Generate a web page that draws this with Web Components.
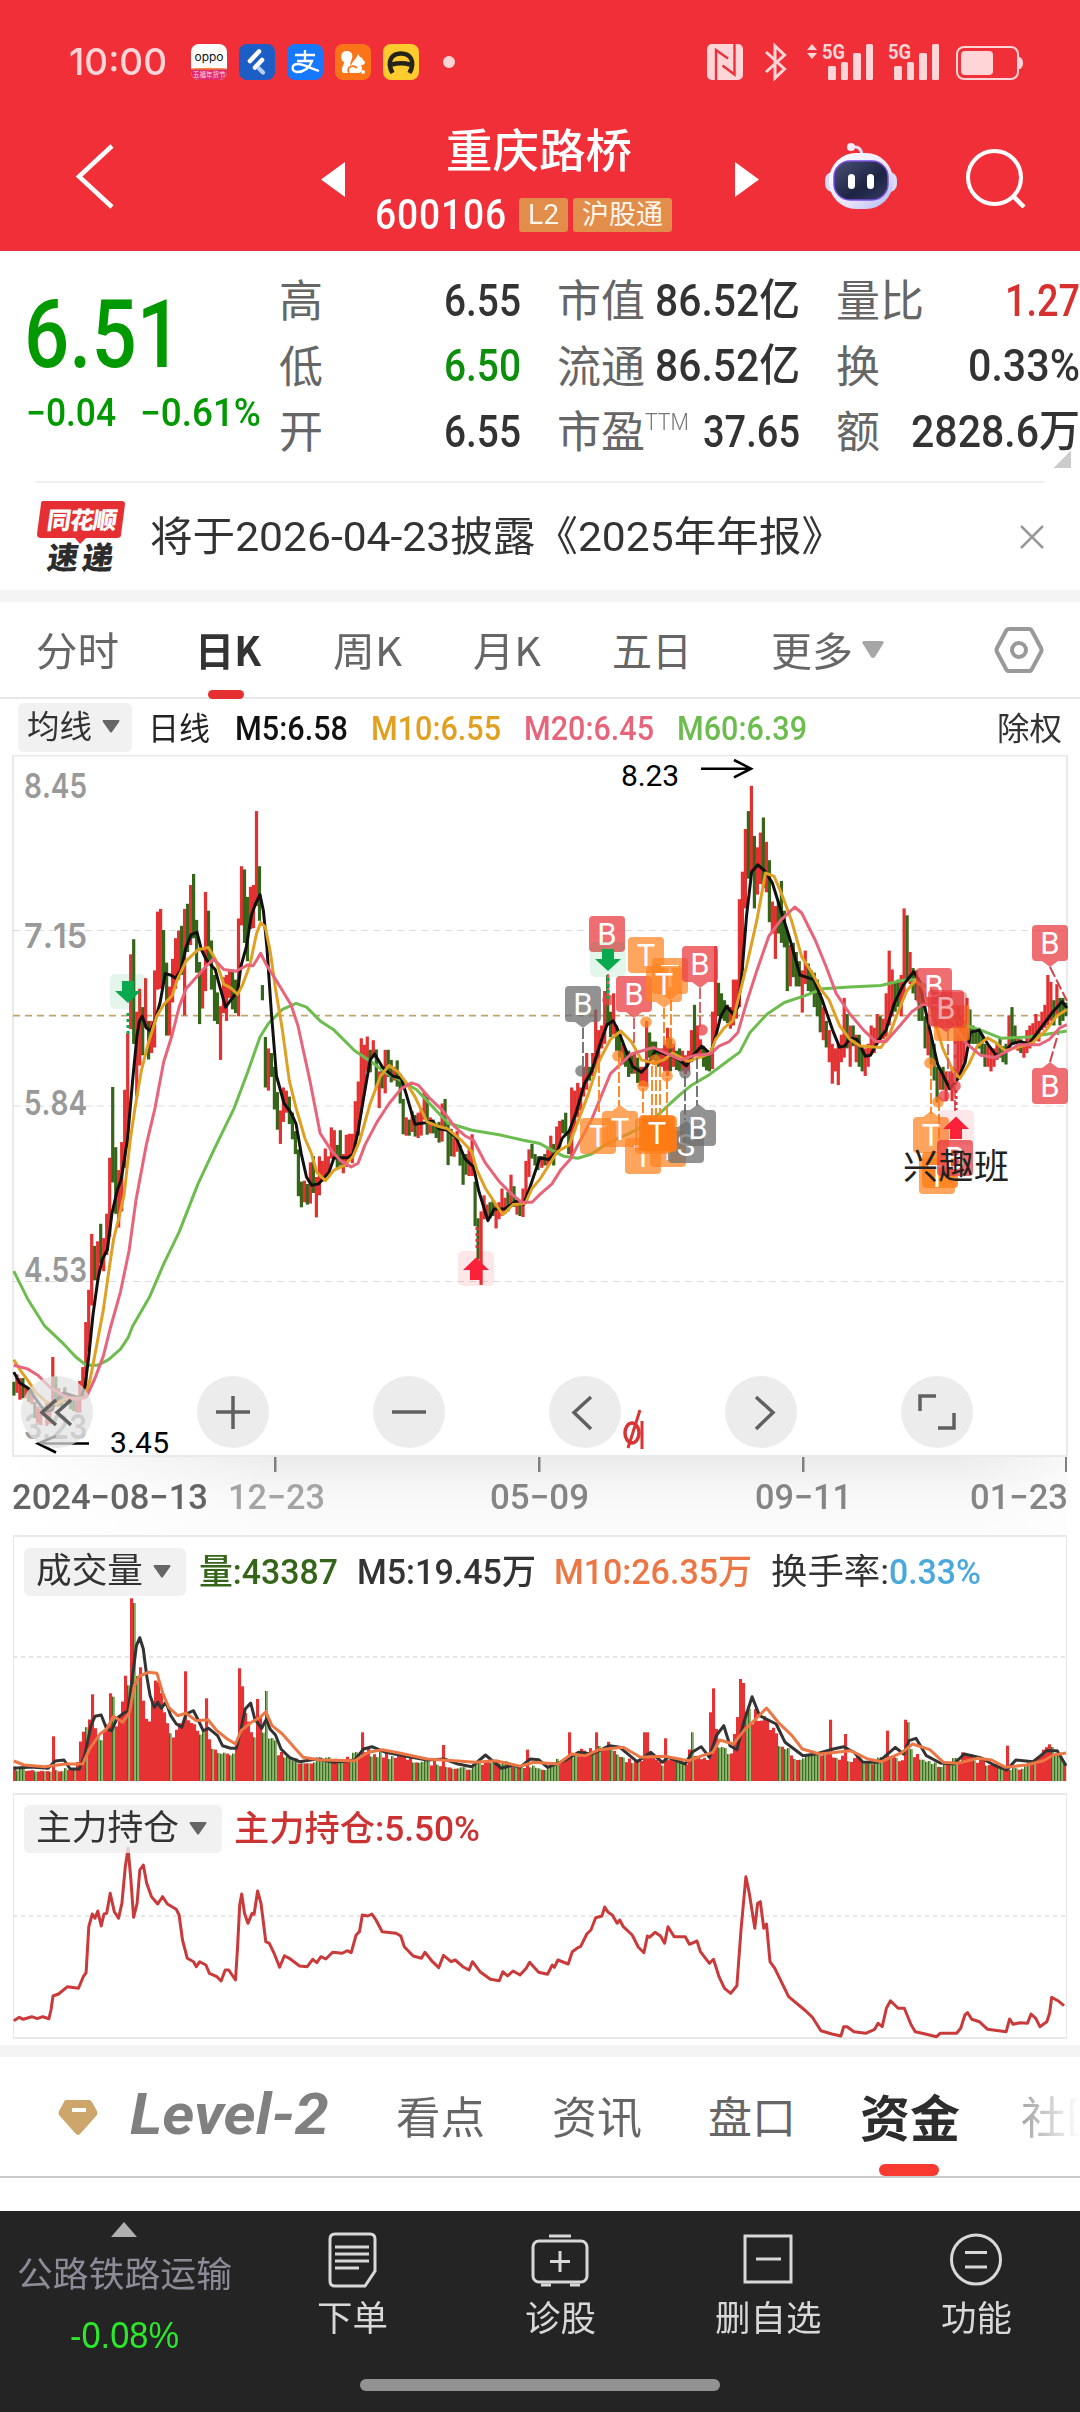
<!DOCTYPE html>
<html lang="zh-CN">
<head>
<meta charset="utf-8">
<title>重庆路桥 600106</title>
<style>
  html, body { margin: 0; padding: 0; }
  body {
    width: 1080px;
    height: 2412px;
    overflow: hidden;
    background: #fff;
    font-family: Roboto, "Noto Sans CJK SC", sans-serif;
    color: #333;
  }
</style>
</head>
<body>
<stock-page></stock-page>

<script>
class StatusBar extends HTMLElement {
  connectedCallback() {
    this.attachShadow({ mode: "open" }).innerHTML = `
      <style>
        :host { display: flex; align-items: center; height: 124px; box-sizing: border-box; padding-left: 69px; color: #ffd5d7; }
        svg { display: block; flex: none; overflow: visible; }
        .time { font: 500 37px/40px Inter, sans-serif; margin-right: 24px; }
        .apps { display: flex; gap: 12px; }
        .dot { width: 12px; height: 12px; border-radius: 50%; background: #ffd5d7; margin-left: 24px; }
        .sys { margin-left: 251px; }
      </style>
      <fit-text class="time" w="98">10:00</fit-text>
      <div class="apps">
        <svg width="36" height="36" viewBox="0 0 36 36">
          <defs><clipPath id="c"><rect width="36" height="36" rx="8"/></clipPath></defs>
          <g clip-path="url(#c)">
            <rect width="36" height="36" fill="#fff"/>
            <path d="M0 25q18-2 36 0v11H0z" fill="#e02c6c"/><path d="M0 24.500q18-1.500 36 0v1H0z" fill="#f08c3c"/>
            <text x="3.500" y="17" font-family="Inter, sans-serif" font-size="11" fill="#111" textLength="29" lengthAdjust="spacingAndGlyphs">oppo</text>
            <text x="2" y="33" font-family="Noto Sans CJK SC, sans-serif" font-size="6.500" fill="#ffd9e4">五福年货节</text>
            <path d="M26 5l3 2M29 3v4M27 8h4" stroke="#f4dcb0" stroke-width=".7"/>
          </g>
        </svg>
        <svg width="36" height="36" viewBox="0 0 36 36">
          <rect width="36" height="36" rx="8" fill="#1c5dc6"/>
          <g stroke="#fff" stroke-width="4.600" stroke-linecap="round"><path d="M11 17L20 7.500"/><path d="M16 23.500l7-7.500"/></g>
          <path d="M20 24.500l4 4" stroke="#b6d0f6" stroke-width="4.200" stroke-linecap="round"/>
        </svg>
        <svg width="36" height="36" viewBox="0 0 36 36">
          <rect width="36" height="36" rx="8" fill="#1677ff"/>
          <g fill="none" stroke="#fff" stroke-width="2.300"><path d="M8 11h20M18 6v11M10 17h15c-3 8-9 11-15 11-6-1-6-8 1-8 5 0 12 4 21 7"/></g>
        </svg>
        <svg width="36" height="36" viewBox="0 0 36 36">
          <rect width="36" height="36" rx="8" fill="#fb7417"/>
          <path d="M8 29c-3-5 1-7 1-11C5 17 5 7 11 7c6-1 8 5 5 10-1 2-1 4 0 5 1-5 5-6 7-12l2 3c2 0 3 3 5 5 0 3-3 3-4 3 2 4 1 7-2 8z" fill="#fff"/>
          <path d="M14 29c-3-6 4-9 8-5" fill="none" stroke="#fb7417" stroke-width="1.800"/><circle cx="28" cy="28" r="2" fill="#fff"/>
        </svg>
        <svg width="36" height="36" viewBox="0 0 36 36">
          <rect width="36" height="36" rx="8" fill="#ffcb2f"/>
          <path d="M9.500 29C3 17 9 9.500 18 9.500S33 17 26.500 29M9 20.500q9-2.500 18 0" fill="none" stroke="#252418" stroke-width="4.500"/>
        </svg>
      </div>
      <div class="dot"></div>
      <svg class="sys" width="320" height="40" viewBox="706 42 320 40" fill="#ffd5d7">
        <rect x="707" y="44" width="36" height="36" rx="5"/>
        <path d="M716 80V50l12 8.500M722.500 65.500l12 9V44" fill="none" stroke="#f12f38" stroke-width="2.400"/>
        <path d="M766 52l18.500 17-9.500 9V46l9.500 9-18.500 17" fill="none" stroke="#ffd5d7" stroke-width="3"/>
        <path d="M807 50l5-6 5 6zM807 53h10l-5 6z"/>
        <text x="822" y="59" font-family="Roboto, sans-serif" font-size="21" font-weight="700" textLength="23" lengthAdjust="spacingAndGlyphs">5G</text>
        <rect x="828" y="66" width="8" height="14" rx="1.500"/><rect x="841" y="62" width="7" height="18" rx="1.500"/>
        <rect x="853" y="53" width="8" height="27" rx="1.500"/><rect x="866" y="44" width="7" height="36" rx="1.500"/>
        <text x="888" y="59" font-family="Roboto, sans-serif" font-size="21" font-weight="700" textLength="23" lengthAdjust="spacingAndGlyphs">5G</text>
        <rect x="894" y="66" width="8" height="14" rx="1.500"/><rect x="907" y="62" width="7" height="18" rx="1.500"/>
        <rect x="919" y="53" width="8" height="27" rx="1.500"/><rect x="932" y="44" width="7" height="36" rx="1.500"/>
        <rect x="957" y="47" width="61" height="32" rx="7" fill="none" stroke="#ffd5d7" stroke-width="2"/>
        <rect x="961" y="51" width="32" height="24" rx="4"/><path d="M1019 57h1q3 2 3 6t-3 6h-1z"/>
      </svg>`;
  }
}

class TitleBar extends HTMLElement {
  connectedCallback() {
    this.attachShadow({ mode: "open" }).innerHTML = `
      <style>
        :host { display: flex; align-items: flex-start; height: 127px; color: #fff; }
        svg { display: block; flex: none; }
        .back { margin: 18px 0 0 74px; }
        .prev { margin: 38px 0 0 205px; }
        .mid { width: 390px; height: 127px; display: flex; flex-direction: column; align-items: center; }
        .name { font: 500 46px/46px "Noto Sans CJK SC", sans-serif; margin: 0 2px 0 0; }
        .code { display: flex; align-items: center; gap: 5px; height: 36px; margin: 27px 2px 0 0; width: 328px; }
        .num { font-size: 42px; line-height: 42px; font-weight: 500; letter-spacing: 1px; margin-right: 7px; }
        .tag { background: #e28d4a; color: #fff6ec; border-radius: 3px; height: 34px; font-size: 27px; line-height: 34px; padding: 0 9px; }
        .next { margin: 38px 0 0 0; }
        .bot { margin: 16px 0 0 64px; }
        .find { margin: 22px 0 0 66px; }
      </style>
      <svg class="back" width="42" height="68" viewBox="74 142 42 68"><path d="M112 146L79 176.500l33 30.500" fill="none" stroke="#fff" stroke-width="4.500"/></svg>
      <svg class="prev" width="24" height="35" viewBox="0 0 24 35"><path d="M24 0v35L0 17.500z" fill="#fff"/></svg>
      <div class="mid">
        <fit-text class="name" w="186">重庆路桥</fit-text>
        <div class="code">
          <fit-text class="num" w="132">600106</fit-text>
          <div class="tag"><fit-text w="31">L2</fit-text></div>
          <div class="tag"><fit-text w="81">沪股通</fit-text></div>
        </div>
      </div>
      <svg class="next" width="24" height="35" viewBox="0 0 24 35"><path d="M0 0v35l24-17.500z" fill="#fff"/></svg>
      <svg class="bot" width="76" height="72" viewBox="823 140 76 72">
        <defs>
          <linearGradient id="h" x1="0" y1="0" x2="1" y2="1"><stop offset="0" stop-color="#fff"/><stop offset=".6" stop-color="#e9e4fc"/><stop offset="1" stop-color="#a9b8f5"/></linearGradient>
          <linearGradient id="f" x1="0" y1="0" x2="1" y2="1"><stop offset="0" stop-color="#4b5275"/><stop offset=".6" stop-color="#1c2343"/><stop offset="1" stop-color="#353c62"/></linearGradient>
        </defs>
        <path d="M851 147q10-2 11 8" fill="none" stroke="#e6dcf6" stroke-width="3"/><circle cx="851" cy="147" r="4" fill="#f2ecfb"/>
        <rect x="825" y="172" width="72" height="20" rx="8" fill="#d8dcf8"/>
        <rect x="829" y="153" width="64" height="56" rx="27" fill="url(#h)"/>
        <rect x="834" y="161" width="54" height="39" rx="16" fill="url(#f)" stroke="#7a4ee0" stroke-width="1.500"/>
        <rect x="848" y="174" width="7" height="15" rx="3.500" fill="#fff"/><rect x="867" y="174" width="7" height="15" rx="3.500" fill="#fff"/>
      </svg>
      <svg class="find" width="62" height="62" viewBox="965 146 62 62" fill="none" stroke="#fff" stroke-width="4"><circle cx="994.500" cy="177.500" r="26.500"/><path d="M1014 197l10 10" stroke-width="4.500"/></svg>`;
  }
}

// label on the left, figure on the right
class StatItem extends HTMLElement {
  connectedCallback() {
    const label = this.getAttribute("label");
    const sup = this.getAttribute("sup");
    this.attachShadow({ mode: "open" }).innerHTML = `
      <style>
        :host { display: flex; align-items: center; height: 65.5px; color: var(--tone, #333); }
        .l { color: #666; font: 44px/60px "Noto Sans CJK SC", sans-serif; margin: -3px 0 0 -2px; }
        .s { color: #777; font: 300 23px/24px Roboto, sans-serif; margin-top: -16px; }
        .v { margin-left: auto; font-size: 44px; line-height: 60px; font-weight: 500; margin-top: 2px; }
      </style>
      <fit-text class="l" w="${label.length * 44}">${label}</fit-text>
      ${sup ? `<fit-text class="s" w="44">${sup}</fit-text>` : ""}
      <fit-text class="v" w="${this.getAttribute("w")}"><slot></slot></fit-text>`;
  }
}

class QuotePanel extends HTMLElement {
  connectedCallback() {
    this.attachShadow({ mode: "open" }).innerHTML = `
      <style>
        :host { display: block; height: 232px; box-sizing: border-box; position: relative; }
        .grid { display: grid; grid-template-columns: 243px 240px 241px 242px; column-gap: 38px; grid-auto-flow: column; grid-template-rows: repeat(3, 65.5px); padding-top: 16px; }
        .price { grid-row: 1 / span 3; color: #090; }
        .big { font-size: 94px; line-height: 100px; font-weight: 500; margin: 18px 0 0 24px; }
        .chg { display: flex; gap: 24px; margin: 6px 0 0 26px; font-size: 38px; line-height: 44px; font-weight: 500; }
        .more { position: absolute; left: 1054px; top: 199px; border: solid transparent; border-width: 18px 0 0 17px; width: 0; height: 0; background: linear-gradient(135deg, transparent 50%, #ccc 50%) border-box; }
        hr { position: absolute; left: 36px; right: 36px; bottom: 0; margin: 0; border: 0; border-top: 2px solid #eee; }
      </style>
      <div class="grid">
        <div class="price">
          <fit-text class="big" w="158">6.51</fit-text>
          <div class="chg"><fit-text w="90">−0.04</fit-text><fit-text w="121">−0.61%</fit-text></div>
        </div>
        <stat-item label="高" w="77">6.55</stat-item>
        <stat-item label="低" w="77" style="--tone:#0c8f0c">6.50</stat-item>
        <stat-item label="开" w="77">6.55</stat-item>
        <stat-item label="市值" w="145">86.52亿</stat-item>
        <stat-item label="流通" w="145">86.52亿</stat-item>
        <stat-item label="市盈" sup="TTM" w="97">37.65</stat-item>
        <stat-item label="量比" w="75" style="--tone:#d9302f">1.27</stat-item>
        <stat-item label="换" w="112">0.33%</stat-item>
        <stat-item label="额" w="169">2828.6万</stat-item>
      </div>
      <div class="more"></div><hr>`;
  }
}

class NoticeBar extends HTMLElement {
  connectedCallback() {
    this.attachShadow({ mode: "open" }).innerHTML = `
      <style>
        :host { display: flex; align-items: center; height: 107px; border-bottom: 12px solid #f4f4f4; }
        svg { flex: none; overflow: visible; }
        .logo { margin-left: 36px; }
        .t { margin-left: 24px; font-size: 41px; line-height: 60px; }
        .x { margin-left: 176px; }
      </style>
      <svg class="logo" width="90" height="76" viewBox="36 498 90 76">
        <path d="M43 500h79q3 0 3 3l-4 31q0 3-4 3H86l-6 6-5-6H41q-4 0-4-4l4-30q0-3 2-3z" fill="#e52f33"/>
        <g font-family="Noto Sans CJK SC, sans-serif" font-weight="900">
          <text transform="translate(46 528) skewX(-8)" font-size="24" fill="#fff" textLength="70">同花顺</text>
          <text transform="translate(46 568) skewX(-8)" font-size="31" fill="#2c2c2c" textLength="66">速递</text>
        </g>
      </svg>
      <fit-text class="t" w="694">将于2026-04-23披露《2025年年报》</fit-text>
      <svg class="x" width="24" height="24" viewBox="0 0 24 24" stroke="#999" stroke-width="2.500"><path d="M1 1l22 22M23 1L1 23"/></svg>`;
  }
}

class PeriodTabs extends HTMLElement {
  connectedCallback() {
    this.attachShadow({ mode: "open" }).innerHTML = `
      <style>
        :host { display: flex; align-items: center; height: 95px; border-bottom: 2px solid #e8e8e8; color: #666; font: 40px/60px "Noto Sans CJK SC", sans-serif; padding-left: 36px; }
        fit-text, .on { margin-right: var(--g); margin-top: -2px; }
        .on { position: relative; font-weight: 700; color: #333; }
        .on fit-text { margin: 0 0 0 -1px; }
        .on::after { content: ""; position: absolute; left: 12px; top: 71px; width: 36px; height: 9px; border-radius: 5px; background: #e52f30; }
        svg { flex: none; }
      </style>
      <fit-text w="83" style="--g:77px">分时</fit-text>
      <div class="on" style="--g:72px"><fit-text w="66">日K</fit-text></div>
      <fit-text w="69" style="--g:71px">周K</fit-text>
      <fit-text w="68" style="--g:71px">月K</fit-text>
      <fit-text w="80" style="--g:79px">五日</fit-text>
      <fit-text w="82" style="--g:9px">更多</fit-text>
      <svg width="22" height="18" viewBox="0 0 22 18"><path d="M2 0h18q3 1 1 3L13 16q-2 2-4 0L1 3Q-1 1 2 0z" fill="#a6a6a6"/></svg>
      <svg style="margin-left:110px" width="50" height="48" viewBox="0 0 50 48" fill="none" stroke="#999" stroke-width="4"><path d="M15 3h20q2 0 3 2l9 17q1 2 0 4l-9 17q-1 2-3 2H15q-2 0-3-2L3 26q-1-2 0-4l9-17q1-2 3-2z"/><circle cx="25" cy="24" r="7"/></svg>`;
  }
}

// grey drop-down pill used above every chart
class PickChip extends HTMLElement {
  connectedCallback() {
    this.attachShadow({ mode: "open" }).innerHTML = `
      <style>
        :host { display: flex; align-items: center; flex: none; background: rgba(238,238,238,.8); border-radius: 6px; box-sizing: border-box; }
        svg { flex: none; margin: -2px 0 0 10px; }
      </style>
      <fit-text w="${this.getAttribute("w")}"><slot></slot></fit-text>
      <svg width="18" height="13" viewBox="0 0 18 13"><path d="M1 0h16q1 1 0 2L10 12q-1 1-2 0L1 2Q0 1 1 0z" fill="#666"/></svg>`;
  }
}

class MaLegend extends HTMLElement {
  connectedCallback() {
    this.attachShadow({ mode: "open" }).innerHTML = `
      <style>
        :host { display: flex; align-items: center; height: 56px; padding-left: 18px; font-size: 33px; line-height: 48px; font-weight: 500; }
        pick-chip { width: 114px; height: 49px; padding-left: 9px; font-weight: 400; font-size: 32px; }
        fit-text { margin-top: 3px; }
        .n { font-weight: 400; font-size: 32px; }
      </style>
      <pick-chip w="65">均线</pick-chip>
      <fit-text class="n" style="margin-left:16px;color:#222" w="62">日线</fit-text>
      <fit-text style="margin-left:25px;color:#111" w="113">M5:6.58</fit-text>
      <fit-text style="margin-left:23px;color:#e2a020" w="130">M10:6.55</fit-text>
      <fit-text style="margin-left:23px;color:#e8647a" w="130">M20:6.45</fit-text>
      <fit-text style="margin-left:23px;color:#6cbd4e" w="130">M60:6.39</fit-text>
      <fit-text class="n" style="margin-left:190px" w="65">除权</fit-text>`;
  }
}

// Plot units: 2.904 per px across, 2.178 per px down.
const KX = 2.904, KY = 2.178, HALF = 1568;
const BARS_A = `1376-1406g 1360-1400r 1368-1415r 1368-1412g 1385-1412r 1390-1420g 1390-1425r 1420-1455g 1430-1465r 1435-1470r 1430-1450g 1420-1472r 1430-1468r 1322-1440r 1365-1430g 1390-1430r 1400-1430g 1388-1420g 1400-1425r 1405-1436g 1410-1440g 1410-1443r 1374-1443r 1344-1410r 1246-1390r 1176-1310r 1054-1210r 1080-1155g 1070-1155r 1032-1118g 1063-1135r 1010-1100r 888-1060r 734-942g 865-1010g 915-1040r 854-1005r 740-910r 617-860r 445-608r 412-640g 570-755r 520-687r 560-665g 497-605r 590-674g 590-660r 480-648r 352-522r 346-520r 392-510g 463-622g 515-622r 455-550r 410-520r 393-500r 383-490g 346-578r 335-440g 294-425r 270-410g 370-485g 462-597g 480-563r 309-525r 350-460g 415-522g 490-590g 528-597g 558-675r 495-573r 490-590r 480-540r 478-565g 500-573g 367-580r 253-382r 260-420g 320-460g 298-390r 294-388r 133-340r 253-372g 512-545g 625-735g 650-742r 660-712g 690-783g 745-827g 785-858r 735-810r 742-790r 755-815g 790-848g 830-880g 870-972g 940-996g 938-985r 945-990g 898-988r 885-965g 930-1018r 885-970r 895-940r 868-930r 885-920r 822-890r 828-892r 860-910g 828-905g 880-922r 838-908r 836-890r 836-900r 765-870r 722-840r 628-790r 642-750r 624-700r 653-702g 632-670r 652-735g 700-780r 690-737g 653-748r 653-712g 675-724g 690-720r 676-733g 705-770g 760-837g 800-840r 805-840g 787-832r 795-842g 790-845r 780-840r 745-805r 755-838g 800-835r 805-835g 815-845g 810-855g 770-853r 760-825g 815-904g 825-885g 845-886r 830-875r 860-905g 885-947g 880-925g 870-928r 837-928r 940-1037g 1020-1110g 1005-1165r 970-1022r 990-1020r 985-1020g 980-1015g 990-1042r 985-1022r 955-1015r 975-1010r 962-1005g 925-990r 950-995g 980-1012r 985-1015g 955-1017r 895-985r 870-930r 858-890g 880-905g 885-915g`;
const BARS_B = `885-910r 880-905g 870-905r 840-895r 858-905g 820-880r 808-865r 805-835g 790-840g 830-880g 735-885r 742-830r 725-800r 735-785r 690-755r 660-740r 690-720g 660-710r 565-695r 610-680r 600-650r 525-640r 490-600g 570-625g 530-620r 600-655g 620-670g 640-685r 650-690g 655-712g 665-705g 660-705r 670-725g 690-732r 690-733r 590-733r 615-670g 635-675g 635-685g 650-690g 650-690r 640-700r 605-710r 625-700g 640-690r 655-697g 650-700g 655-700r 665-706r 655-700r 610-680r 555-665g 600-665r 630-670r 645-690g 655-698g 660-700g 570-695r 427-630r 507-580g 530-585g 545-590g 555-595g 560-607r 500-600r 500-585r 325-560r 265-480r 172-345r 133-280g 78-270r 187-345g 212-315r 180-292r 147-300g 200-310r 240-375g 330-400r 340-455r 330-400g 285-420g 350-430g 395-525g 425-515r 420-495g 440-515g 460-515g 480-572r 437-510r 465-525g 480-530g 485-560g 500-580g 530-615g 560-632r 590-648g 610-680r 640-727r 650-700r 640-730r 620-680r 540-670r 575-650g 600-690r 600-645g 620-680r 620-690g 645-700g 650-710r 640-690r 600-660r 605-660r 575-640r 580-635g 585-630r 530-625r 437-600r 478-580r 505-570g 500-560g 490-580r 345-540r 360-500g 440-510r 475-530g 480-545g 500-590g 520-590g 580-650g 600-665r 625-685g 640-720g 690-768g 700-740r 690-740g 700-765r 700-740r 690-765r 600-730r 560-715r 580-700r 590-680r 540-640r 565-640g 600-640g 610-640g 605-650g 620-665g 640-690g 645-690r 650-700r 650-690r 640-675r 625-670g 645-680g 640-685g 578-650r 560-640g 600-640g 625-655r 630-660g 635-670r 610-660r 600-650r 595-640r 575-630r 590-635r 570-610r 555-605r 490-600r 505-590r 545-600g 510-580r 540-600g 540-590g 550-580g`;
const LINES = [
  ["#6cbd4e", "40,1135 80,1195 130,1255 180,1290 220,1322 250,1340 285,1340 315,1328 350,1305 372,1280 385,1255 435,1190 475,1120 520,1050 575,945 625,865 680,780 720,700 755,625 780,595 820,565 860,552 890,560 930,590 970,610 1030,655 1080,680 1120,703 1160,718 1210,740 1260,780 1300,812 1370,828 1450,838 1520,850",
    "0,857 30,870 70,885 110,889 150,880 200,855 260,835 310,815 350,790 400,755 440,730 490,708 540,680 580,658 610,615 660,575 710,550 770,535 820,520 900,516 990,513 1050,502 1095,500 1140,525 1180,565 1230,598 1280,610 1340,628 1420,625 1480,618 1530,612"],
  ["#111", "40,1355 57,1378 85,1392 105,1415 130,1440 150,1438 165,1415 185,1400 205,1405 235,1412 247,1385 258,1320 270,1230 285,1150 297,1110 312,1088 325,1010 340,960 352,935 370,850 385,720 398,620 405,590 413,580 425,605 437,612 450,590 465,550 480,487 495,490 510,497 525,480 540,430 555,402 572,397 585,435 600,458 625,478 640,520 655,560 670,545 690,525 700,470 715,430 730,360 742,335 755,315 765,350 775,430 788,570 803,710 825,770 845,790 860,815 875,880 890,930 905,948 925,945 955,920 970,888 1010,888 1025,880 1040,830 1060,740 1075,675 1088,662 1110,690 1140,710 1165,715 1180,750 1205,815 1235,812 1255,808 1275,825 1300,828 1325,845 1350,890 1375,908 1390,960 1417,1025 1435,1000 1465,1000 1500,982 1520,990 1540,950",
    "0,888 25,892 50,875 65,845 85,830 105,790 130,725 150,700 175,640 195,598 213,590 230,615 250,655 270,690 295,702 310,690 335,655 355,660 375,665 400,672 425,688 445,665 470,645 495,662 510,625 525,580 542,558 560,575 575,560 585,500 600,360 615,265 633,250 655,265 675,290 700,350 725,410 755,490 775,495 795,500 820,545 850,610 870,647 885,645 900,628 920,630 945,667 960,665 985,630 1005,610 1030,550 1055,512 1085,483 1100,500 1125,585 1155,685 1190,738 1215,715 1235,680 1250,615 1275,610 1300,640 1325,665 1345,662 1370,640 1395,635 1420,640 1460,600 1490,570 1517,548 1530,562"],
  ["#dfa024", "40,1328 60,1352 80,1372 105,1400 135,1420 165,1425 195,1410 225,1412 247,1410 262,1370 280,1300 300,1220 315,1140 330,1065 345,1020 360,970 378,850 392,780 410,700 430,640 455,580 475,555 500,535 515,500 540,460 575,435 605,430 625,455 650,510 670,518 690,532 705,510 725,470 745,400 757,376 770,385 785,440 800,520 820,610 840,720 860,780 885,845 905,880 920,920 945,938 970,915 1000,905 1025,885 1045,850 1075,770 1105,710 1130,687 1155,700 1180,725 1205,755 1240,810 1275,820 1300,825 1340,850 1370,875 1385,915 1410,955 1440,990 1460,1012 1490,990 1525,988 1545,955",
    "0,935 25,905 50,875 85,860 110,810 140,750 170,680 205,630 235,612 265,635 295,675 330,682 360,675 385,660 410,670 430,678 470,668 495,660 510,630 535,605 560,590 580,530 600,470 630,370 655,268 680,275 700,310 730,370 760,450 790,485 815,520 840,545 870,600 900,630 930,645 990,648 1015,620 1040,570 1065,525 1090,502 1110,515 1135,560 1170,650 1200,700 1220,715 1245,685 1270,645 1300,627 1325,638 1350,655 1375,650 1400,645 1430,638 1470,610 1500,580 1530,565"],
  ["#e8647a", "40,1340 80,1348 110,1362 145,1388 180,1405 220,1415 250,1410 275,1370 300,1320 320,1260 350,1180 375,1090 395,980 425,860 450,780 475,680 500,620 520,560 540,520 570,495 600,470 620,455 650,478 685,482 720,468 735,470 757,443 775,470 805,505 845,555 865,600 900,720 930,835 960,870 990,895 1020,908 1040,900 1060,860 1095,810 1130,770 1165,738 1195,725 1215,730 1250,760 1285,785 1320,820 1350,840 1375,850 1410,900 1450,940 1490,970 1515,985 1545,985",
    "0,968 35,945 60,915 90,890 110,860 150,805 180,750 205,705 240,680 265,662 330,648 370,662 410,675 450,665 495,662 520,645 550,635 575,615 600,550 630,480 665,405 700,370 740,342 760,355 800,415 830,470 860,530 900,575 940,610 975,635 1005,635 1040,605 1080,570 1115,552 1150,565 1200,600 1240,640 1280,665 1320,670 1360,655 1390,642 1450,642 1480,630 1510,605 1530,598"]
];
// x, y, letter, fill, tip side
const MARKS = [
  [565, 986, "B", "gray", "d"], [589, 916, "B", "red", ""], [616, 976, "B", "red", "d"],
  [628, 937, "T", "org", ""], [652, 958, "T", "org", "d"], [646, 966, "T", "org", "d"], [682, 946, "B", "red", "d"],
  [580, 1118, "T", "org", ""], [602, 1111, "T", "org", "u"], [625, 1138, "T", "org", ""], [650, 1131, "T", "org", ""],
  [668, 1127, "S", "gray", "u"], [635, 1118, "", "org", ""], [641, 1116, "", "org", ""], [639, 1115, "T", "org2", ""], [680, 1110, "B", "gray", "u"],
  [916, 968, "B", "red", ""], [934, 1005, "", "org", ""], [928, 990, "B", "red", "d"], [931, 992, "", "red2", ""],
  [1032, 925, "B", "red", "d"], [1032, 1068, "B", "red", "u"],
  [913, 1117, "T", "org", "u"], [922, 1152, "", "org2", ""], [919, 1158, "T", "org", ""], [937, 1140, "B", "red", ""]
];
const INK = { gray: "rgba(110,110,110,.75)", red: "rgba(232,64,68,.76)", red2: "rgba(226,40,44,.4)", org: "rgba(255,130,30,.72)", org2: "rgba(255,120,15,.8)" };

function toPoints(list, shift, top) {
  return list.split(" ").map(p => {
    const [x, y] = p.split(",").map(Number);
    return ((x + shift) / KX).toFixed(1) + "," + (top + y / KY).toFixed(1);
  }).join(" ");
}

class KlineChart extends HTMLElement {
  connectedCallback() {
    this.attachShadow({ mode: "open" }).innerHTML = `
      <style>
        :host { display: block; position: relative; height: 702px; }
        svg { display: block; }
        .ctl { position: absolute; left: 21px; top: 621px; display: flex; gap: 104px; }
        .ctl span { width: 72px; height: 72px; border-radius: 50%; background: rgba(234,234,234,.9); }
        .ctl span:first-child { background: rgba(226,226,226,.72); }
        .ctl svg { fill: none; stroke: #606060; stroke-width: 3.500; }
        text { white-space: pre; font-kerning: none; }
      </style>
      <svg width="1080" height="702" viewBox="0 755 1080 702">
        <rect x="13" y="755.500" width="1054" height="700.500" fill="none" stroke="#e8e8e8" stroke-width="1.800"/>
        <g stroke="#dcdcdc" stroke-dasharray="7 5"><path d="M13 930.500h1054M13 1106h1054M13 1281.500h1054"/></g>
        <path d="M13 1015.700h1054" stroke="#c0a468" stroke-width="1.700" stroke-dasharray="7 5"/>
        <g font-family="Inter, sans-serif" font-weight="600" font-size="34" fill="#999">
          ${[["8.45", 798], ["7.15", 948], ["5.84", 1114.5], ["4.53", 1281.5], ["3.23", 1438.5]].map(([t, y]) => `<text x="24" y="${y}" textLength="63" lengthAdjust="spacingAndGlyphs">${t}</text>`).join("")}
        </g>
        ${this._bars(BARS_A, 40, 1562)}${this._bars(BARS_B, HALF + 5, HALF + 1527)}
        <g fill="none" stroke-width="3" stroke-linejoin="round">
          ${LINES.map(([c, a, b]) => `<polyline stroke="${c}" points="${toPoints(a, 0, 750)} ${toPoints(b, HALF, 750)}"/>`).join("")}
        </g>
        ${this._stems()}
        ${MARKS.map(m => this._mark(...m)).join("")}
        ${this._arrow(128, 974, "#08a84e", true)}${this._arrow(608, 942, "#08a84e", true)}
        ${this._arrow(476, 1251, "#fa2138", false)}${this._arrow(956, 1110, "#fa2138", false)}
        <g fill="none" stroke="#000" stroke-width="2.600"><path d="M701 768.700h50M734 760l17 8.700-17 8.700M89 1443.500H38M56 1436l-18 7.500 18 9"/></g>
        <g font-family="Roboto, sans-serif" font-size="30" fill="#000">
          <text x="621" y="785.500" textLength="58">8.23</text><text x="110" y="1453" textLength="59">3.45</text>
          <text x="903" y="1179" font-family="Noto Sans CJK SC, sans-serif" font-size="35" fill="#222" textLength="106">兴趣班</text>
        </g>
        <g fill="none" stroke="#d93535" stroke-width="3.500"><ellipse cx="632" cy="1433" rx="7" ry="10"/><path d="M642 1421v28M640 1410l-12 38" stroke-width="3"/></g>
      </svg>
      <div class="ctl">
        ${["M35 24L21 36.500 35 49M50 24L36 36.500 50 49", "M36 20v33M19 36h34", "M19 36h34", "M42 21L25 36.500 42 53", "M31 21l17 15.500L31 53", "M19 35V20h16M53 37v15H37"]
          .map(d => `<span><svg width="72" height="72" viewBox="0 0 72 72"><path d="${d}"/></svg></span>`).join("")}
      </div>`;
  }
  _bars(src, from, to) {
    const list = src.split(" ");
    const step = (to - from) / (list.length - 1);
    return list.map((b, i) => {
      const [, t, e, c] = b.match(/(\d+)-(\d+)(\w)/);
      const x = (from + step * i) / KX - 1.5;
      return `<rect x="${x.toFixed(1)}" y="${(750 + t / KY).toFixed(1)}" width="3.200" height="${((e - t) / KY).toFixed(1)}" fill="${c === "r" ? "#e33030" : "#356519"}"/>`;
    }).join("");
  }
  _stems() {
    const s = [
      ["#777", 583, 1028, 583, 1066], ["#e06068", 608, 974, 608, 1000], ["#e06068", 634, 1018, 634, 1044], ["#ff8a28", 664, 1008, 664, 1045],
      ["#ff8a28", 671, 1000, 671, 1042], ["#e06068", 700, 988, 700, 1030], ["#ff8a28", 599, 1062, 599, 1112], ["#ff8a28", 619, 1058, 619, 1106],
      ["#ff8a28", 643, 1088, 643, 1136], ["#ff8a28", 652, 1066, 652, 1115], ["#ff8a28", 656, 1066, 656, 1115], ["#ff8a28", 660, 1066, 660, 1115],
      ["#ff8a28", 667, 1078, 667, 1128], ["#777", 685, 1076, 685, 1120], ["#777", 697, 1058, 697, 1106], ["#d8404a", 1050, 967, 1067, 1001],
      ["#d8404a", 1050, 1062, 1058, 1034], ["#ff8a28", 931, 1065, 931, 1114], ["#ff8a28", 939, 1100, 939, 1150], ["#e06068", 955, 1030, 955, 1112], ["#e06068", 948, 1030, 948, 1080]
    ].map(([c, a, b, d, e]) => `<path d="M${a} ${b}L${d} ${e}" stroke="${c}" stroke-width="2" stroke-dasharray="11 3"/>`).join("");
    const dots = [["gray", 581, 1071], ["org", 618, 1056], ["org", 646, 1022], ["org", 670, 1043], ["org", 643, 1086], ["org", 667, 1076], ["gray", 685, 1073], ["red", 702, 1030], ["red", 608, 1000], ["org", 930, 1063], ["org", 938, 1102], ["red", 955, 1086], ["red", 944, 1096], ["org", 655, 1060]]
      .map(([k, x, y]) => `<circle cx="${x}" cy="${y}" r="5.800" fill="${INK[k]}"/>`).join("");
    const dotted = `<path d="M128 1013v23M608 978v24" stroke="#08a84e" stroke-width="3" stroke-dasharray="3 3"/><path d="M477 1227v22M956 1090v20" stroke="#e03040" stroke-width="3" stroke-dasharray="3 3"/>`;
    return s + dots + dotted;
  }
  _mark(x, y, t, k, tip) {
    let d = `M${x + 4} ${y}h28q4 0 4 4v28q0 4-4 4h-28q-4 0-4-4v-28q0-4 4-4z`;
    if (tip === "d") d += `M${x + 10} ${y + 36}h16l-8 6z`;
    if (tip === "u") d += `M${x + 10} ${y}h16l-8-6z`;
    return `<path d="${d}" fill="${INK[k]}"/>` +
      (t ? `<text x="${x + 18}" y="${y + 28.5}" text-anchor="middle" font-family="Roboto, sans-serif" font-size="31" fill="#fff">${t}</text>` : "");
  }
  _arrow(x, y, c, down) {
    const p = down ? "M-6 7h12v10h7l-13 12-13-12h7z" : "M-6 29h12V19h7L0 6.500-13 19h7z";
    return `<g transform="translate(${x} ${y})"><rect x="-18" width="36" height="35" rx="5" fill="${c}" opacity=".11"/><path d="${p}" fill="${c}"/></g>`;
  }
}

class DateAxis extends HTMLElement {
  connectedCallback() {
    this.attachShadow({ mode: "open" }).innerHTML = `
      <style>
        :host { display: flex; align-items: center; height: 78px; margin: 0 13px; font: 500 35px/40px Roboto, sans-serif; color: #858585; background:
          linear-gradient(#808080, #808080) 261px 0/2.5px 15px no-repeat, linear-gradient(#808080, #808080) 525px 0/2.5px 15px no-repeat,
          linear-gradient(#808080, #808080) 789px 0/2.5px 15px no-repeat, linear-gradient(#808080, #808080) 1052px 0/2.5px 15px no-repeat,
          linear-gradient(90deg, #fff, transparent 26%, transparent 90%, rgba(255,255,255,.6)), linear-gradient(#ececec, #f8f8f8 50%, #fcfcfc); }
        fit-text { margin-top: 4px; }
        .a { color: #646464; }
        .b { color: #a4a4a4; }
      </style>
      <fit-text class="a" style="margin-left:-1px" w="196">2024−08−13</fit-text>
      <fit-text class="b" style="margin-left:20px" w="97">12−23</fit-text>
      <fit-text style="margin-left:165px" w="99">05−09</fit-text>
      <fit-text style="margin-left:166px" w="97">09−11</fit-text>
      <fit-text style="margin-left:118px" w="98">01−23</fit-text>`;
  }
}

const VOL = "18,568 45,575 72,575 90,575 110,565 115,520 122,450 128,395 133,430 150,470 160,430 168,470 176,400 183,300 194,200 203,270 208,380 216,440 225,330 235,380 245,455 262,450 275,430 290,460 300,470 310,500 320,525 335,515 342,535 348,370 358,420 366,470 380,430 390,480 400,500 410,530 430,545 460,545 500,545 520,520 535,520 560,525 600,545 640,555 680,570 700,550 730,550 760,560 790,570 805,550 830,530 870,510 890,500 905,530 915,550 940,530 960,560 980,540 995,560 1003,500 1015,540 1030,550 1036,430 1042,480 1060,540 1075,400 1090,390 1100,430 1110,440 1130,480 1145,510 1160,540 1200,520 1240,540 1260,550 1280,540 1295,520 1310,550 1316,450 1325,520 1345,550 1370,560 1400,530 1430,550 1460,570 1480,570 1500,540 1527,510 1550,560";
const SPIKES = { 76: 472, 133: 346, 159: 343, 163: 353, 190: 58, 194: 72, 203: 265, 228: 310, 268: 277, 298: 358, 347: 268, 351: 322, 372: 360, 386: 336, 525: 460, 642: 498, 764: 512, 829: 460, 864: 460, 938: 460, 968: 478, 1007: 460, 1033: 400, 1038: 328, 1074: 300, 1078: 312, 1208: 422, 1226: 465, 1290: 455, 1313: 422, 1318: 430, 1465: 500, 1526: 496 };
const GREEN_SPIKES = [163, 194, 386, 1007, 1318];
const VMA5 = "20,568 45,564 70,568 80,546 93,543 102,570 115,570 123,530 132,440 138,412 147,408 155,450 162,455 170,418 178,405 186,395 192,300 198,200 203,176 208,210 213,290 218,350 224,385 229,370 234,388 241,370 248,410 256,435 264,445 270,405 281,395 287,420 295,455 303,448 316,470 323,500 335,508 343,508 350,450 356,390 364,372 370,420 380,448 387,420 392,450 400,468 408,510 420,535 435,548 460,540 485,550 515,543 528,510 540,503 560,520 590,532 620,543 645,540 665,555 685,563 705,528 728,568 745,558 755,565 770,540 782,542 795,565 820,545 840,520 860,525 885,500 900,505 925,548 945,520 962,550 970,535 995,555 1005,520 1018,503 1030,535 1040,470 1051,440 1060,500 1070,512 1080,430 1092,353 1103,410 1127,435 1140,490 1166,530 1185,525 1210,510 1225,503 1240,520 1253,550 1275,550 1300,505 1312,525 1320,485 1330,478 1345,530 1365,552 1385,555 1400,525 1425,537 1445,560 1462,573 1475,543 1500,548 1520,515 1535,515 1548,560";
const VMA10 = "20,546 35,558 65,563 95,555 120,555 130,510 145,465 155,450 165,412 178,430 188,400 195,320 202,292 215,280 228,283 236,340 245,385 258,410 270,403 285,425 302,422 315,455 330,480 342,495 350,455 365,430 378,415 386,398 395,440 410,465 425,500 440,535 465,543 515,545 535,520 555,512 580,522 620,540 660,545 690,550 720,545 755,562 775,550 810,555 830,525 850,530 870,512 905,505 930,535 965,532 1000,545 1020,530 1035,520 1045,483 1065,495 1080,455 1095,425 1113,387 1130,430 1150,470 1165,510 1190,525 1235,515 1260,540 1280,548 1310,520 1325,495 1350,512 1370,550 1390,553 1420,538 1440,543 1460,565 1490,558 1515,545 1530,528 1548,522";

class VolumeChart extends HTMLElement {
  connectedCallback() {
    this.attachShadow({ mode: "open" }).innerHTML = `
      <style>
        :host { display: block; height: 247px; margin: 0 13px; border: solid #e8e8e8; border-width: 2px 1.5px 0; box-sizing: border-box; }
        .row { display: flex; align-items: center; height: 70px; padding-left: 10px; font-size: 35px; line-height: 50px; }
        pick-chip { width: 162px; height: 48px; padding-left: 12px; }
        .row > fit-text { margin-top: 2px; }
        b { font-weight: 500; }
        svg { display: block; margin-left: -14px; }
      </style>
      <div class="row">
        <pick-chip w="107">成交量</pick-chip>
        <fit-text style="margin-left:13px;color:#356519" w="139"><b>量:43387</b></fit-text>
        <fit-text style="margin-left:19px" w="179"><b>M5:19.45万</b></fit-text>
        <fit-text style="margin-left:18px;color:#ec7745" w="198"><b>M10:26.35万</b></fit-text>
        <fit-text style="margin-left:19px" w="118">换手率:</fit-text>
        <fit-text style="color:#4aa8dc" w="92"><b>0.33%</b></fit-text>
      </div>
      <svg width="1080" height="174" viewBox="0 1608 1080 174" overflow="visible">
        <path d="M13 1658h1054" stroke="#e6e6e6" stroke-width="2" stroke-dasharray="4 4"/>
        ${this._bars()}
        <g fill="none" stroke-width="3" stroke-linejoin="round"><polyline stroke="#333" points="${this._pts(VMA5)}"/><polyline stroke="#ec7745" points="${this._pts(VMA10)}"/></g>
      </svg>`;
  }
  _pts(s) {
    return s.split(" ").map(p => { const [x, y] = p.split(","); return (x / 1.452).toFixed(1) + "," + (1580 + y / 3).toFixed(1); }).join(" ");
  }
  _bars() {
    const env = VOL.split(" ").map(p => p.split(",").map(Number));
    const out = [];
    let seed = 7, run = "r";
    for (let x = 14.5; x < 1066; x += 3) {
      const u = x * 1.452;
      let i = env.findIndex(p => p[0] > u);
      if (i < 1) i = 1;
      const [a, b] = [env[i - 1], env[i]];
      seed = (seed * 16807) % 2147483647;
      const rnd = seed / 2147483647;
      let y = a[1] + (b[1] - a[1]) * (u - a[0]) / (b[0] - a[0]);
      y += (rnd - .5) * (604 - y) * .35;
      if (rnd > .6) run = run === "r" ? "g" : "r";
      let c = u > 105 && u < 240 ? (rnd > .82 ? "g" : "r") : run;
      for (const k in SPIKES) {
        if (Math.abs(k - u) < 2.2) { y = SPIKES[k]; c = GREEN_SPIKES.includes(+k) ? "g" : "r"; }
      }
      const top = (1580 + y / 3).toFixed(1), h = (1782 - top).toFixed(1);
      out.push(c === "r" ? `<rect x="${x - 1.5}" y="${top}" width="3.100" height="${h}" fill="#e63232"/>`
        : `<rect x="${x - 1.5}" y="${top}" width="3" height="${h}" fill="#8fb873"/><rect x="${x - 1.5}" y="${top}" width="1.200" height="${h}" fill="#3d6b22"/>`);
    }
    return out.join("");
  }
}

const HOLD = "20,722 28,712 34,718 46,710 54,716 62,710 71,716 74,690 77,648 85,642 98,620 114,625 121,590 125,578 129,440 134,402 138,415 142,393 147,438 151,402 155,400 160,340 166,395 172,415 177,370 182,260 186,205 190,300 194,412 199,370 203,270 208,255 213,310 220,350 229,372 236,350 243,372 256,388 260,405 265,480 272,535 281,545 285,560 290,545 299,555 304,580 315,590 321,603 327,570 332,570 342,600 345,500 348,375 351,342 355,400 360,430 366,400 369,403 374,333 379,370 386,485 391,490 398,520 406,562 413,527 420,535 435,558 446,560 454,538 460,548 466,530 473,537 483,517 497,520 504,512 510,518 517,465 522,455 526,405 534,408 540,402 546,420 555,455 575,460 582,468 587,500 600,528 612,535 617,517 628,545 637,563 644,526 655,545 661,540 672,560 681,570 686,545 697,575 712,598 725,602 730,575 737,588 745,573 755,585 764,565 769,547 782,577 795,583 802,555 805,562 810,540 825,552 831,515 839,503 843,500 852,462 858,450 865,413 874,408 878,381 883,397 889,405 896,430 900,420 905,440 918,465 927,502 935,518 940,468 943,472 951,457 959,468 965,490 970,440 979,470 995,470 1001,493 1012,483 1017,515 1030,550 1036,538 1044,590 1052,625 1061,640 1070,617 1076,450 1083,290 1088,340 1096,445 1100,370 1104,365 1109,445 1113,432 1118,545 1125,565 1138,620 1145,650 1170,693 1180,713 1192,752 1208,762 1221,768 1225,740 1230,740 1240,755 1257,760 1270,748 1275,730 1281,740 1287,685 1293,662 1304,685 1313,685 1323,735 1329,755 1345,763 1360,770 1365,760 1389,760 1395,745 1401,705 1405,698 1411,718 1422,725 1434,748 1461,755 1466,717 1471,733 1481,728 1492,730 1497,702 1504,715 1510,740 1520,725 1524,700 1527,652 1536,662 1545,677";

class HoldingChart extends HTMLElement {
  connectedCallback() {
    const pts = HOLD.split(" ").map(p => { const [x, y] = p.split(","); return (x / 1.452).toFixed(1) + "," + (1780 + y / 3).toFixed(1); }).join(" ");
    this.attachShadow({ mode: "open" }).innerHTML = `
      <style>
        :host { display: grid; height: 246px; margin: 11px 13px 6px; border: solid #e8e8e8; border-width: 2px 1.5px; box-sizing: border-box; }
        svg, .row { grid-area: 1 / 1; }
        .row { display: flex; align-items: center; height: 68px; padding-left: 10px; font-size: 35px; line-height: 50px; }
        pick-chip { width: 198px; height: 48px; padding-left: 12px; }
        .row > fit-text { margin-top: 2px; }
        b { font-weight: 500; }
        svg { margin-left: -14px; }
      </style>
      <svg width="1080" height="242" viewBox="0 1795 1080 242" fill="none" overflow="visible">
        <path d="M13 1916h1054" stroke="#e6e6e6" stroke-width="2" stroke-dasharray="4 4"/>
        <polyline points="${pts}" stroke="#cb3a3a" stroke-width="3" stroke-linejoin="round"/>
      </svg>
      <div class="row">
        <pick-chip w="143">主力持仓</pick-chip>
        <fit-text style="margin-left:12px;color:#cc3232" w="246"><b>主力持仓:5.50%</b></fit-text>
      </div>`;
  }
}

class SectionTabs extends HTMLElement {
  connectedCallback() {
    this.attachShadow({ mode: "open" }).innerHTML = `
      <style>
        :host { display: flex; align-items: center; height: 119px; border-top: 12px solid #f4f4f4; border-bottom: 2px solid #c9c9c9; overflow: hidden; color: #666; font: 44px/60px "Noto Sans CJK SC", sans-serif; padding: 0 0 0 55px; }
        svg { flex: none; }
        fit-text { margin-top: -3px; }
        .lv { font: italic 700 57px/60px Roboto, sans-serif; color: #808080; margin-left: 29px; }
        .on { position: relative; margin-left: 64px; font-weight: 700; font-size: 50px; color: #2d2d2d; }
        .on::after { content: ""; position: absolute; left: 19px; top: 76px; width: 60px; height: 12px; border-radius: 6px; background: #f93a31; }
        .out { margin-left: 61px; width: 60px; overflow: hidden; mask-image: linear-gradient(90deg, #0009, #0000); }
        .out fit-text { margin: 0; }
        .out { margin-top: -3px; }
      </style>
      <svg width="46" height="44" viewBox="55 2094 46 44"><path d="M66 2099h23q2 0 3 2l5 9q1 2 0 4l-17 19q-2 2-4 0l-17-19q-1-2 0-4l5-9q0-2 2-2z" fill="#cda66b"/><path d="M72 2109h14" stroke="#fff" stroke-width="4"/></svg>
      <fit-text class="lv" w="199">Level-2</fit-text>
      <fit-text style="margin-left:67px" w="89">看点</fit-text>
      <fit-text style="margin-left:67px" w="90">资讯</fit-text>
      <fit-text style="margin-left:66px" w="88">盘口</fit-text>
      <div class="on"><fit-text w="100">资金</fit-text></div>
      <div class="out"><fit-text w="90">社区</fit-text></div>`;
  }
}

class ActionItem extends HTMLElement {
  connectedCallback() {
    const label = this.getAttribute("label");
    this.attachShadow({ mode: "open" }).innerHTML = `
      <style>
        :host { display: flex; flex-direction: column; align-items: center; width: 208px; padding-top: 18px; box-sizing: border-box; color: #d8d8d8; font: 35px/48px "Noto Sans CJK SC", sans-serif; }
        .i { height: 60px; }
        fit-text { margin-top: 3px; }
      </style>
      <div class="i"><slot></slot></div>
      <fit-text w="${label.length * 35.5}">${label}</fit-text>`;
  }
}

class BottomBar extends HTMLElement {
  connectedCallback() {
    this.attachShadow({ mode: "open" }).innerHTML = `
      <style>
        :host { display: block; height: 202px; background: #242424; margin-top: 33px; }
        .row { display: flex; height: 168px; }
        .sector { width: 248px; display: flex; flex-direction: column; align-items: center; box-sizing: border-box; padding: 11px 0 0; }
        .in { font: 35px/48px "Noto Sans CJK SC", sans-serif; color: #8b8c98; margin-top: 11px; }
        .pct { font: 36px/44px "Liberation Sans", sans-serif; color: #2be82b; margin-top: 18px; }
        .line { width: 360px; height: 12px; border-radius: 6px; background: #929292; margin: 0 auto; }
        svg { display: block; fill: none; stroke: #d8d8d8; stroke-width: 3; }
      </style>
      <div class="row">
        <div class="sector">
          <svg width="26" height="15" viewBox="0 0 26 15"><path d="M13 0l13 15H0z" fill="#b0b0b0" stroke="none"/></svg>
          <fit-text class="in" w="215">公路铁路运输</fit-text>
          <fit-text class="pct" w="109">-0.08%</fit-text>
        </div>
        <action-item label="下单"><svg width="54" height="60" viewBox="0 0 54 60"><path d="M10 5h35q5 0 5 5v32L40 57H10q-5 0-5-5V10q0-5 5-5zM10 18h34M10 25h34M10 32h34M10 39h24"/></svg></action-item>
        <action-item label="诊股"><svg width="60" height="60" viewBox="0 0 60 60"><rect x="3" y="12" width="54" height="41" rx="6"/><path d="M19 7h22M30 22v21M20 32.500h20M11 56h10M40 56h10"/></svg></action-item>
        <action-item label="删自选"><svg width="54" height="60" viewBox="0 0 54 60"><path d="M4 7h46v46H4zM15 30h25"/></svg></action-item>
        <action-item label="功能"><svg width="56" height="60" viewBox="0 0 56 60"><circle cx="28" cy="30.500" r="24.500"/><path d="M17 23.500h22M17 38h22"/></svg></action-item>
      </div>
      <div class="line"></div>`;
  }
}

class StockPage extends HTMLElement {
  connectedCallback() {
    this.attachShadow({ mode: "open" }).innerHTML = `
      <style>
        :host { display: block; width: 1080px; }
        header { background: #f12f38; }
      </style>
      <header><status-bar></status-bar><title-bar></title-bar></header>
      <quote-panel></quote-panel>
      <notice-bar></notice-bar>
      <period-tabs></period-tabs>
      <ma-legend></ma-legend>
      <kline-chart></kline-chart>
      <date-axis></date-axis>
      <volume-chart></volume-chart>
      <holding-chart></holding-chart>
      <section-tabs></section-tabs>
      <bottom-bar></bottom-bar>`;
  }
}

// one line of text squeezed or stretched to the width in "w"
class FitText extends HTMLElement {
  connectedCallback() {
    this.attachShadow({ mode: "open" }).innerHTML = `
      <style>
        :host { display: block; flex: none; white-space: nowrap; }
        span { display: inline-block; transform-origin: 0 50%; vertical-align: top; }
      </style>
      <span><slot></slot></span>`;
    const w = Number(this.getAttribute("w"));
    const span = this.shadowRoot.querySelector("span");
    this.style.width = w + "px";
    span.style.transform = `scaleX(${w / span.getBoundingClientRect().width})`;
  }
}

window.customElements.define("stock-page", StockPage);
window.customElements.define("status-bar", StatusBar);
window.customElements.define("title-bar", TitleBar);
window.customElements.define("quote-panel", QuotePanel);
window.customElements.define("stat-item", StatItem);
window.customElements.define("notice-bar", NoticeBar);
window.customElements.define("period-tabs", PeriodTabs);
window.customElements.define("ma-legend", MaLegend);
window.customElements.define("kline-chart", KlineChart);
window.customElements.define("date-axis", DateAxis);
window.customElements.define("volume-chart", VolumeChart);
window.customElements.define("holding-chart", HoldingChart);
window.customElements.define("section-tabs", SectionTabs);
window.customElements.define("bottom-bar", BottomBar);
window.customElements.define("action-item", ActionItem);
window.customElements.define("pick-chip", PickChip);
window.customElements.define("fit-text", FitText);
</script>
</body>
</html>
